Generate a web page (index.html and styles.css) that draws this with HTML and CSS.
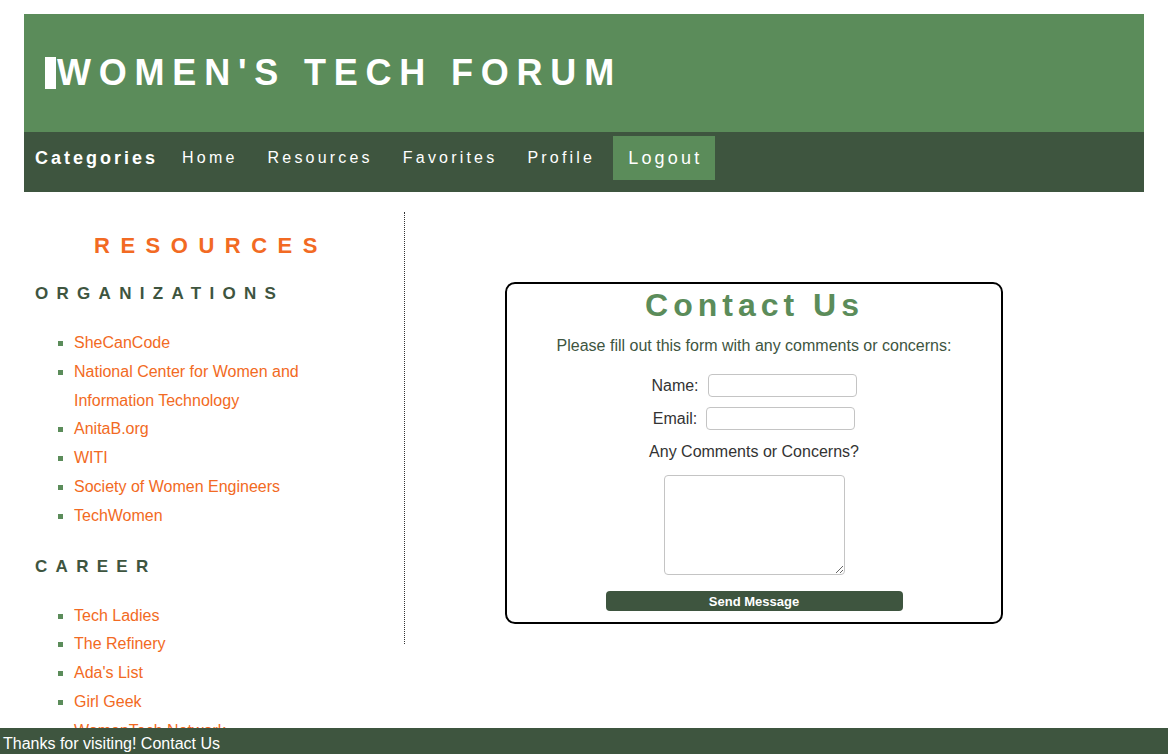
FILE: index.html
```html
<!DOCTYPE html>
<html lang="en">
<head>
<meta charset="utf-8">
<title>Women's Tech Forum - Contact</title>
<link rel="stylesheet" href="styles.css">
</head>
<body>
<div class="wrapper">
  <header class="masthead">
    <span class="caret"></span><h1 class="site-title">WOMEN'S TECH FORUM</h1>
  </header>
  <nav class="topnav">
    <span class="nav-label">Categories</span>
    <a class="nav-link" href="#">Home</a>
    <a class="nav-link" href="#">Resources</a>
    <a class="nav-link" href="#">Favorites</a>
    <a class="nav-link" href="#">Profile</a>
    <a class="nav-link nav-logout" href="#">Logout</a>
  </nav>
  <div class="page">
    <aside class="sidebar">
      <h2 class="side-title">RESOURCES</h2>
      <h3 class="side-heading">ORGANIZATIONS</h3>
      <ul class="side-list">
        <li><a href="#">SheCanCode</a></li>
        <li><a href="#">National Center for Women and Information Technology</a></li>
        <li><a href="#">AnitaB.org</a></li>
        <li><a href="#">WITI</a></li>
        <li><a href="#">Society of Women Engineers</a></li>
        <li><a href="#">TechWomen</a></li>
      </ul>
      <h3 class="side-heading">CAREER</h3>
      <ul class="side-list">
        <li><a href="#">Tech Ladies</a></li>
        <li><a href="#">The Refinery</a></li>
        <li><a href="#">Ada's List</a></li>
        <li><a href="#">Girl Geek</a></li>
        <li><a href="#">WomenTech Network</a></li>
      </ul>
    </aside>
    <div class="divider"></div>
    <main class="main">
      <form class="contact-box">
        <h2 class="contact-title">Contact Us</h2>
        <p class="contact-intro">Please fill out this form with any comments or concerns:</p>
        <div class="form-row row-name">
          <label for="name">Name:</label>
          <input id="name" class="text-input" type="text">
        </div>
        <div class="form-row row-email">
          <label for="email">Email:</label>
          <input id="email" class="text-input" type="text">
        </div>
        <p class="comments-label">Any Comments or Concerns?</p>
        <textarea class="comments"></textarea>
        <button class="send-btn" type="button">Send Message</button>
      </form>
    </main>
  </div>
</div>
<footer class="site-footer">Thanks for visiting! Contact Us</footer>
</body>
</html>
```
FILE: styles.css
```css
* { box-sizing: border-box; }

body {
  margin: 0;
  font-family: "Liberation Sans", Arial, Helvetica, sans-serif;
  background: #ffffff;
}

.wrapper {
  margin: 14px 24px 0;
}

.masthead {
  height: 118px;
  background: #5b8c5a;
  display: flex;
  align-items: center;
  padding-left: 21px;
}

.caret {
  display: inline-block;
  width: 11px;
  height: 32px;
  background: #ffffff;
  margin-right: 1px;
}

.site-title {
  margin: 0;
  color: #ffffff;
  font-size: 36px;
  font-weight: bold;
  letter-spacing: 7.8px;
  line-height: 40px;
}

.topnav {
  height: 60px;
  background: #3e553f;
  display: flex;
  align-items: flex-start;
  padding: 4px 0 0 11px;
}

.nav-label {
  color: #ffffff;
  font-size: 18px;
  font-weight: bold;
  letter-spacing: 3px;
  line-height: 44px;
  margin-right: 9px;
}

.nav-link {
  color: #ffffff;
  text-decoration: none;
  font-size: 16px;
  letter-spacing: 3.2px;
  line-height: 44px;
  height: 44px;
  padding: 0 15px;
}

.nav-logout {
  font-size: 18px;
  background: #5b8c5a;
  margin-left: 3px;
  padding: 0 13px 0 15px;
}

.page {
  display: flex;
  align-items: flex-start;
  margin-top: 20px;
}

.sidebar {
  width: 380px;
  flex: none;
  padding: 0 30px 0 11px;
}

.divider {
  flex: none;
  width: 1px;
  height: 432px;
  border-left: 1px dotted #333333;
}

.side-title {
  margin: 22px 0 0;
  padding-left: 13px;
  text-align: center;
  color: #f26a23;
  font-size: 22px;
  font-weight: bold;
  letter-spacing: 10.5px;
  line-height: 24px;
}

.side-heading {
  margin: 26px 0 25px;
  color: #3e553f;
  font-size: 17px;
  font-weight: bold;
  letter-spacing: 8.3px;
  line-height: 20px;
}

.side-list {
  margin: 0;
  padding-left: 39px;
  list-style: square;
}

.side-list li {
  font-size: 16px;
  line-height: 28.8px;
}

.side-list li::marker {
  color: #5b8c5a;
}

.side-list a {
  color: #f26a23;
  text-decoration: none;
}

.main {
  flex: 1;
  padding: 70px 0 0 100px;
}

.contact-box {
  width: 498px;
  border: 2px solid #000000;
  border-radius: 10px;
  padding: 3px 0 11px;
  text-align: center;
}

.contact-title {
  margin: 0;
  color: #5b8c5a;
  font-size: 32px;
  font-weight: bold;
  letter-spacing: 5px;
  line-height: 37px;
  padding-left: 1px;
}

.contact-intro {
  margin: 13px 0 0;
  color: #3e553f;
  font-size: 16px;
  line-height: 18px;
}

.form-row {
  display: flex;
  justify-content: center;
  align-items: center;
  gap: 9px;
  height: 23px;
  color: #333333;
  font-size: 16px;
}

.row-name { margin-top: 19px; }
.row-email { margin-top: 10px; }

.text-input {
  width: 149px;
  height: 23px;
  border: 1px solid #c4c4c4;
  border-radius: 4px;
  padding: 0 4px;
  font-size: 13px;
}

.comments-label {
  margin: 13px 0 0;
  color: #333333;
  font-size: 16px;
  line-height: 18px;
}

.comments {
  display: block;
  margin: 14px auto 0;
  width: 181px;
  height: 100px;
  border: 1px solid #c4c4c4;
  border-radius: 4px;
}

.send-btn {
  display: block;
  margin: 16px auto 0;
  width: 297px;
  height: 20px;
  padding: 0;
  border: none;
  border-radius: 4px;
  background: #3e553f;
  color: #ffffff;
  font-family: "Liberation Sans", Arial, Helvetica, sans-serif;
  font-size: 13px;
  font-weight: bold;
}

.site-footer {
  position: fixed;
  left: 0;
  right: 0;
  bottom: 0;
  height: 26px;
  padding: 6px 0 0 3px;
  background: #3e553f;
  color: #ffffff;
  font-size: 16px;
  line-height: 20px;
}
```
